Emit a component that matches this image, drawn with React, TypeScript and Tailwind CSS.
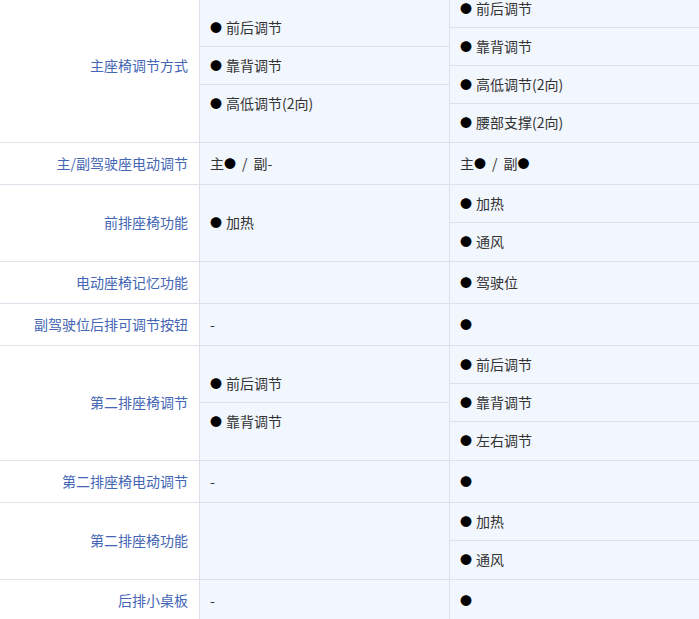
import React from "react";

type Cell = string | string[] | null;
type Row = { label: string; a: Cell; b: Cell };

const rows: Row[] = [
  { label: "主座椅调节方式", a: ["前后调节", "靠背调节", "高低调节(2向)"], b: ["前后调节", "靠背调节", "高低调节(2向)", "腰部支撑(2向)"] },
  { label: "主/副驾驶座电动调节", a: "主● / 副-", b: "主● / 副●" },
  { label: "前排座椅功能", a: ["加热"], b: ["加热", "通风"] },
  { label: "电动座椅记忆功能", a: null, b: ["驾驶位"] },
  { label: "副驾驶位后排可调节按钮", a: "-", b: "●" },
  { label: "第二排座椅调节", a: ["前后调节", "靠背调节"], b: ["前后调节", "靠背调节", "左右调节"] },
  { label: "第二排座椅电动调节", a: "-", b: "●" },
  { label: "第二排座椅功能", a: null, b: ["加热", "通风"] },
  { label: "后排小桌板", a: "-", b: "●" },
];

function Dot() {
  return <span className="inline-block text-black text-[12px] leading-none">●</span>;
}

function Rich({ t }: { t: string }) {
  const parts = t.split(/(●|\s\/\s)/).filter((p) => p !== "");
  return (
    <span>
      {parts.map((p, i) =>
        p === "●" ? (
          <Dot key={i} />
        ) : p.trim() === "/" ? (
          <span key={i} className="mx-[6px]">/</span>
        ) : (
          <span key={i}>{p}</span>
        )
      )}
    </span>
  );
}

function CellView({ c }: { c: Cell }) {
  if (c === null) return <div className="min-h-[41px]" />;
  if (typeof c === "string") {
    return (
      <div className="h-full min-h-[41px] flex items-center pl-[10px] pb-[1px] text-[#333]">
        <Rich t={c} />
      </div>
    );
  }
  return (
    <div className="h-full flex flex-col justify-center">
      {c.map((t, i) => (
        <div
          key={i}
          className={
            "h-[38px] flex items-center pl-[10px] pb-[1px] text-[#333] " +
            (i < c.length - 1 ? "border-b border-[#dde2ea]" : "")
          }
        >
          <span className="inline-block w-[16px]">
            <Dot />
          </span>
          <span>{t}</span>
        </div>
      ))}
    </div>
  );
}

export default function App() {
  return (
    <div
      className="w-[699px] h-[619px] overflow-hidden bg-white text-[14px] leading-[21px]"
      style={{ fontFamily: '"Noto Sans CJK SC", "Microsoft YaHei", sans-serif' }}
    >
      <div className="-mt-[11px] w-[700px]">
        {rows.map((r, i) => (
          <div key={i} className="grid grid-cols-[199px_250px_251px] border-t border-[#dde2ea]">
            <div className="flex items-center justify-end pr-[11px] pb-[1px] text-[#4466b5] bg-white">{r.label}</div>
            <div className="border-l border-[#dde2ea] bg-[#f2f6fd]">
              <CellView c={r.a} />
            </div>
            <div className="border-l border-[#dde2ea] bg-[#f2f6fd]">
              <CellView c={r.b} />
            </div>
          </div>
        ))}
      </div>
    </div>
  );
}
